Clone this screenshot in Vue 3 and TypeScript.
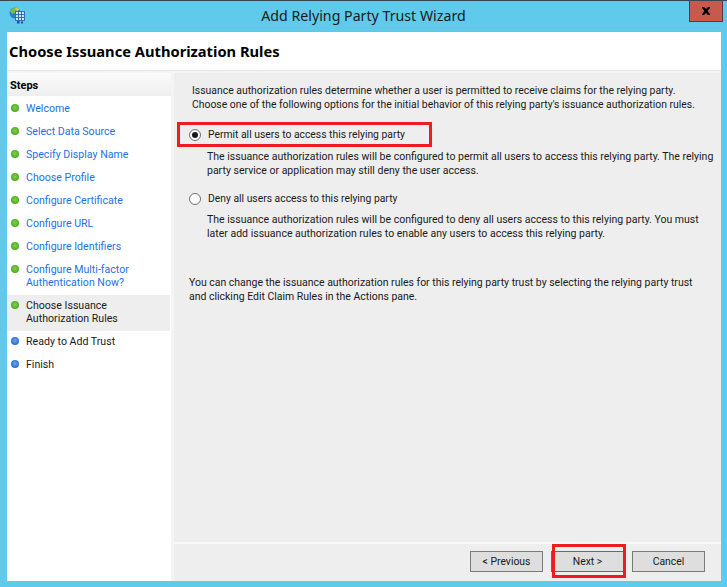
<script setup lang="ts">
interface Step { lines: string[]; state: 'done' | 'current' | 'todo' }
const steps: Step[] = [
  { lines: ['Welcome'], state: 'done' },
  { lines: ['Select Data Source'], state: 'done' },
  { lines: ['Specify Display Name'], state: 'done' },
  { lines: ['Choose Profile'], state: 'done' },
  { lines: ['Configure Certificate'], state: 'done' },
  { lines: ['Configure URL'], state: 'done' },
  { lines: ['Configure Identifiers'], state: 'done' },
  { lines: ['Configure Multi-factor', 'Authentication Now?'], state: 'done' },
  { lines: ['Choose Issuance', 'Authorization Rules'], state: 'current' },
  { lines: ['Ready to Add Trust'], state: 'todo' },
  { lines: ['Finish'], state: 'todo' },
]
</script>

<template>
  <div class="window">
    <div class="titlebar">
      <svg class="app-icon" width="17" height="17" viewBox="0 0 17 17">
        <circle cx="6" cy="6" r="5.5" fill="#2f7fc4" />
        <path d="M1 4 Q3.5 0 8 .8 L7 5 L3.5 7 Z" fill="#7fbf3f" />
        <path d="M6 .6 L10.5 2 L8 4.5 Z" fill="#f2c94c" />
        <rect x="6.5" y="4.5" width="9" height="9" fill="#cfe6f7" stroke="#2f6fb5" />
        <path d="M9.5 4.5 V13.5 M12.5 4.5 V13.5 M6.5 7.5 H15.5 M6.5 10.5 H15.5" stroke="#2f6fb5" fill="none" />
        <rect x="8" y="14" width="2.5" height="2.5" fill="#1d4fa0" />
        <rect x="12" y="14.5" width="2" height="2" fill="#1d4fa0" />
      </svg>
      <div class="title">Add Relying Party Trust Wizard</div>
      <div class="close">
        <svg width="10" height="8" viewBox="0 0 10 8"><path d="M1 0 H3 L5 2 L7 0 H9 V1 L6.5 4 L9 7 V8 H7 L5 6 L3 8 H1 V7 L3.5 4 L1 1 Z" fill="#000" /></svg>
      </div>
    </div>

    <div class="client">
      <header class="page-head">Choose Issuance Authorization Rules</header>
      <div class="body">
        <aside class="steps">
          <div class="steps-head">Steps</div>
          <div v-for="s in steps" :key="s.lines[0]" class="step" :class="s.state">
            <span class="dot" :class="s.state === 'todo' ? 'blue' : 'green'"></span>
            <span class="step-text">
              <span v-for="l in s.lines" :key="l" class="step-line">{{ l }}</span>
            </span>
          </div>
        </aside>

        <main class="panel">
          <div class="content">
            <p class="intro">Issuance authorization rules determine whether a user is permitted to receive claims for the relying party.<br />Choose one of the following options for the initial behavior of this relying party's issuance authorization rules.</p>

            <div class="option first">
              <span class="radio checked"></span>
              <span>Permit all users to access this relying party</span>
              <span class="callout callout-option"></span>
            </div>
            <p class="desc">The issuance authorization rules will be configured to permit all users to access this relying party. The relying<br />party service or application may still deny the user access.</p>

            <div class="option second">
              <span class="radio"></span>
              <span>Deny all users access to this relying party</span>
            </div>
            <p class="desc desc-second">The issuance authorization rules will be configured to deny all users access to this relying party. You must<br />later add issuance authorization rules to enable any users to access this relying party.</p>

            <p class="note">You can change the issuance authorization rules for this relying party trust by selecting the relying party trust<br />and clicking Edit Claim Rules in the Actions pane.</p>
          </div>

          <footer class="footer">
            <button class="btn">&lt; Previous</button>
            <div class="next-wrap">
              <button class="btn next">Next &gt;</button>
              <span class="callout callout-next"></span>
            </div>
            <button class="btn cancel">Cancel</button>
          </footer>
        </main>
      </div>
    </div>
  </div>
</template>

<style>
html, body { margin: 0; padding: 0; }
</style>

<style scoped>
.window {
  width: 727px;
  height: 587px;
  box-sizing: border-box;
  background: #5fcaec;
  border-top: 1px solid #3a4650;
  display: flex;
  flex-direction: column;
  font-family: Roboto, "Noto Sans", sans-serif;
  font-size: 10.6px;
  color: #1a1a1a;
  overflow: hidden;
}
.titlebar {
  height: 30px;
  flex: none;
  display: flex;
  position: relative;
  padding-left: 9px;
  align-items: flex-start;
}
.app-icon { margin-top: 6px; flex: none; }
.title {
  position: absolute;
  left: 0;
  right: 0;
  top: 5px;
  text-align: center;
  font-family: "Noto Sans", sans-serif;
  font-size: 14.2px;
  line-height: 20px;
  color: #1a1a1a;
}
.close {
  position: absolute;
  right: 4px;
  top: 0;
  width: 34px;
  height: 21px;
  box-sizing: border-box;
  background: #c75a4d;
  border: 1px solid #5a3a3a;
  border-top: 0;
  display: flex;
  align-items: center;
  justify-content: center;
}
.client {
  margin: 0 6px 6px 7px;
  flex: 1;
  min-height: 0;
  display: flex;
  flex-direction: column;
  background: #f4f4f4;
  border-top: 1px solid #8ab4c8;
}
.page-head {
  height: 39px;
  flex: none;
  background: #fff;
  box-sizing: border-box;
  padding: 9px 0 0 2px;
  font-family: "Noto Sans", sans-serif;
  font-size: 14.7px;
  line-height: 20px;
  font-weight: 700;
  color: #000;
  border-bottom: 1px solid #e6e6e6;
}
.body { flex: 1; min-height: 0; display: flex; padding-top: 2px; }
.steps {
  width: 164px;
  flex: none;
  background: #fff;
  box-sizing: border-box;
}
.steps-head {
  height: 23px;
  margin-bottom: 2px;
  padding-left: 3px;
  line-height: 25px;
  font-size: 11px;
  font-weight: 700;
  color: #000;
  background: linear-gradient(#fbfbfb, #eeeeee);
}
.step {
  display: flex;
  align-items: flex-start;
  padding: 4px 0 6px 4px;
  margin-right: 1px;
  line-height: 13px;
  color: #1f6fe8;
}
.step.current { background: #eeeeee; color: #1a1a1a; }
.step.todo { color: #1a1a1a; }
.dot {
  width: 8px;
  height: 8px;
  border-radius: 50%;
  margin-top: 2px;
  margin-right: 7px;
  flex: none;
}
.dot.green { background: radial-gradient(circle at 50% 45%, #84cf4a, #43a81c 80%); }
.dot.blue { background: radial-gradient(circle at 50% 45%, #6ea6ee, #1f66d2 80%); }
.step-line { display: block; }
.panel {
  flex: 1;
  margin-left: 3px;
  background: #eeeeee;
  display: flex;
  flex-direction: column;
  min-width: 0;
}
.content { flex: 1; min-height: 0; padding: 11px 0 0 15px; font-size: 10.42px; }
p { margin: 0; line-height: 13.5px; }
.intro { padding-left: 3px; line-height: 14px; }
.option {
  position: relative;
  display: flex;
  align-items: center;
  line-height: 14px;
  font-size: 10.35px;
}
.option.first { margin-top: 16px; }
.option.second { margin-top: 15px; }
.radio {
  width: 12px;
  height: 12px;
  box-sizing: border-box;
  border: 1px solid #707070;
  border-radius: 50%;
  background: #fff;
  margin-right: 7px;
  flex: none;
  position: relative;
}
.radio.checked::after {
  content: "";
  position: absolute;
  left: 2px;
  top: 2px;
  width: 6px;
  height: 6px;
  border-radius: 50%;
  background: #1a1a1a;
}
.desc { margin-top: 8px; padding-left: 18px; font-size: 10.52px; }
.desc-second { margin-top: 7px; }
.note { margin-top: 36px; font-size: 10.48px; }
.callout {
  position: absolute;
  box-sizing: border-box;
  border: 3px solid #ed1c24;
  pointer-events: none;
}
.callout-option { left: -12px; top: -6px; width: 255px; height: 25px; }
.footer {
  height: 39px;
  flex: none;
  border-top: 2px solid #f8f8f8;
  display: flex;
  padding: 7px 16px 0 0;
  justify-content: flex-end;
  gap: 8px;
  box-sizing: border-box;
}
.btn {
  width: 73px;
  height: 21px;
  box-sizing: border-box;
  padding: 0;
  background: #dedede;
  border: 1px solid #7a7a7a;
  font: inherit;
  font-size: 10.4px;
  color: #1a1a1a;
  line-height: 18px;
}
.next-wrap { position: relative; }
.next { border-color: #2a78c4; }
.callout-next { left: 1px; top: -7px; width: 74px; height: 34px; }
</style>
